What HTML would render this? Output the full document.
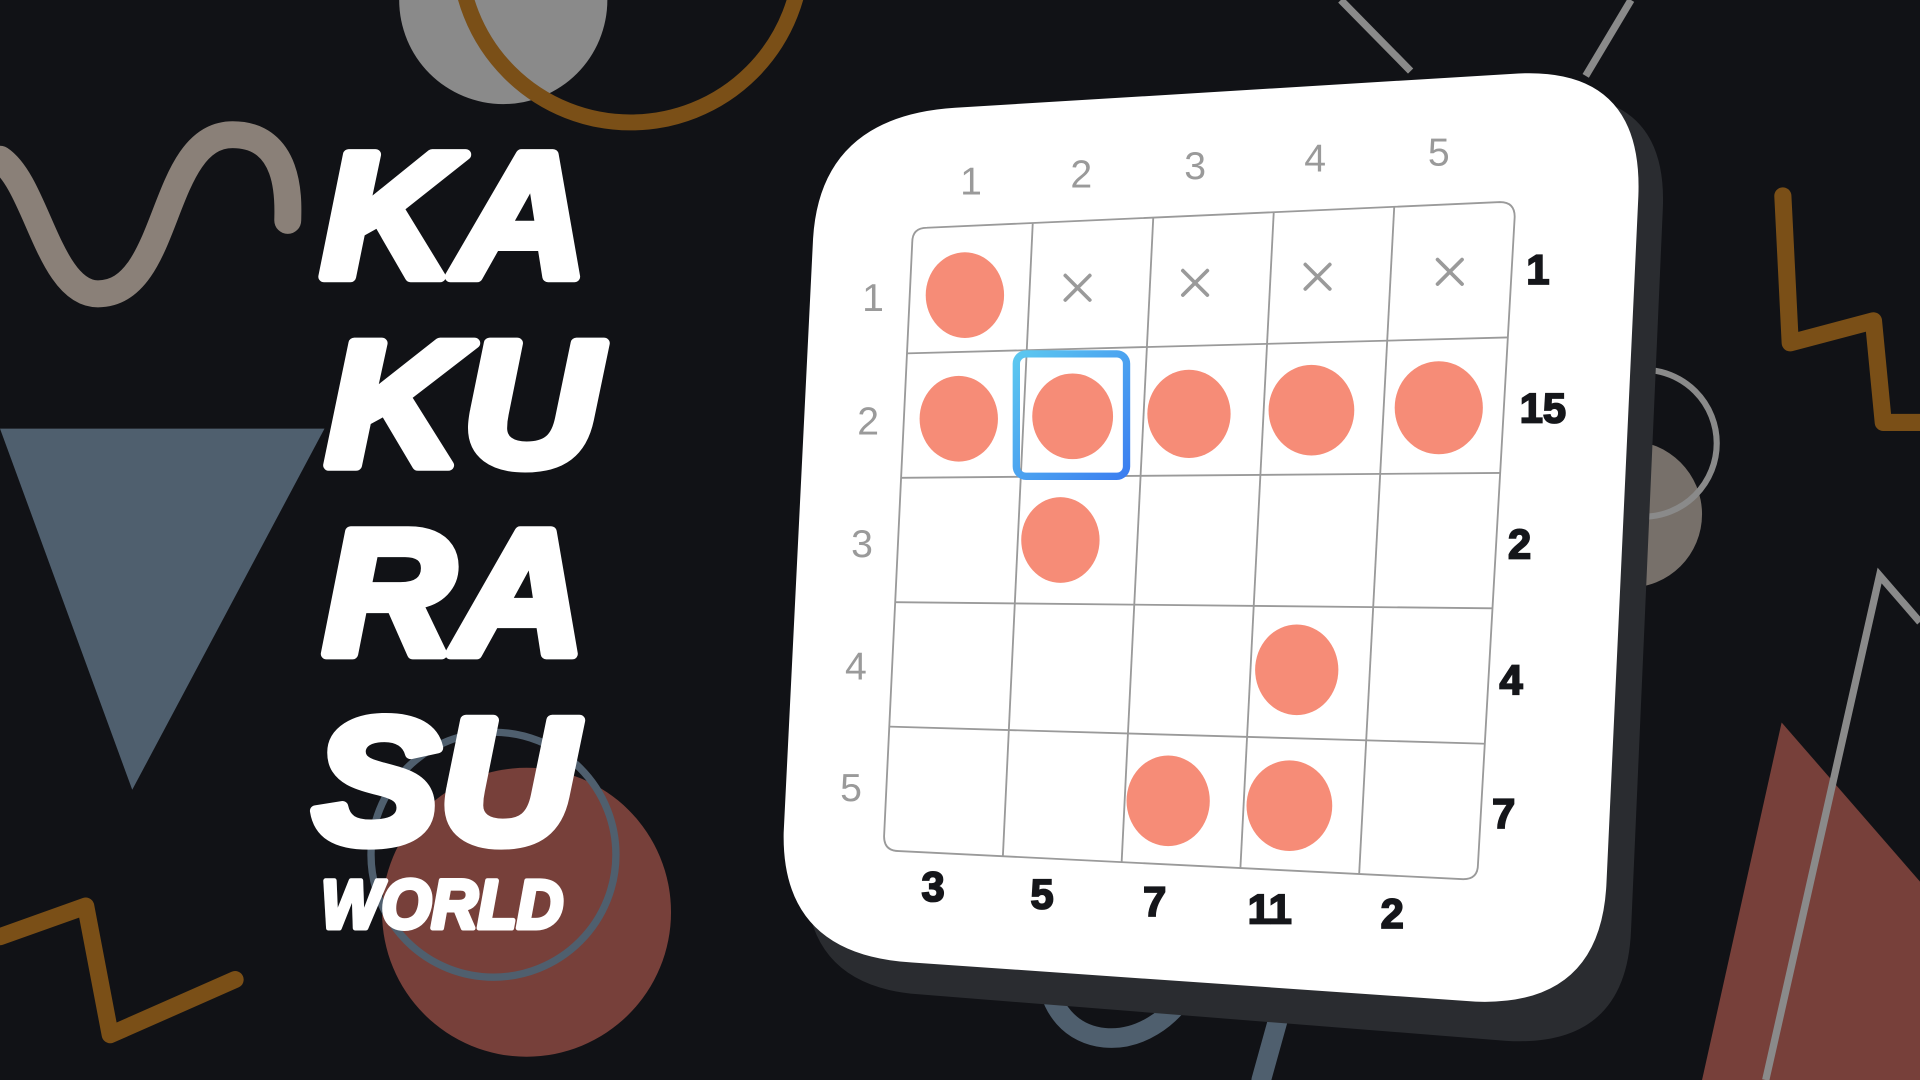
<!DOCTYPE html>
<html><head><meta charset="utf-8"><style>
html,body{margin:0;padding:0;background:#111216;overflow:hidden}
svg{display:block}
</style></head><body>
<svg width="1920" height="1080" viewBox="0 0 1568 882" xmlns="http://www.w3.org/2000/svg">
<rect width="1568" height="882" fill="#111216"/>
<circle cx="411" cy="0" r="85" fill="#8a8a8a"/>
<circle cx="515" cy="-40" r="140" fill="none" stroke="#7a4f17" stroke-width="13"/>
<path d="M0,130 C30,150 40,240 80,240 C140,240 130,110 190,110 C240,110 235,170 235,180" fill="none" stroke="#8a8078" stroke-width="22" stroke-linecap="round"/>
<polygon points="0,350 265,350 108,645" fill="#4f5f6e"/>
<circle cx="430" cy="745" r="118" fill="#77403a"/>
<circle cx="403" cy="698" r="100" fill="none" stroke="#4f5f6e" stroke-width="6"/>
<polyline points="0,765 70,740 90,845 192,800" fill="none" stroke="#7a4f17" stroke-width="14" stroke-linecap="round" stroke-linejoin="round"/>
<line x1="1095" y1="0" x2="1152" y2="58" stroke="#8a8a8a" stroke-width="6"/>
<line x1="1332" y1="0" x2="1295" y2="62" stroke="#8a8a8a" stroke-width="6"/>
<polyline points="1456,160 1462,280 1530,262 1538,345 1568,345" fill="none" stroke="#7a4f17" stroke-width="14" stroke-linecap="round" stroke-linejoin="round"/>
<circle cx="1330" cy="420" r="60" fill="#77706a"/>
<circle cx="1342" cy="362" r="60" fill="none" stroke="#8a8a8a" stroke-width="5"/>
<polygon points="1455,590 1568,720 1568,882 1390,882" fill="#77403a"/>
<polyline points="1442,882 1535,470 1568,508" fill="none" stroke="#8a8a8a" stroke-width="6"/>
<path d="M855,790 C855,860 940,870 975,800 M1050,810 L1030,882" fill="none" stroke="#4f5f6e" stroke-width="16" stroke-linecap="round"/>
<path d="M770,110 L1260,78 Q1362,72 1358,170 L1332,760 Q1328,856 1230,850 L750,812 Q655,805 658,710 L680,210 Q684,115 770,110 Z" fill="#2a2c30"/>
<path d="M780,88 L1240,60 Q1342,55 1338,160 L1312,720 Q1308,822 1205,818 L745,786 Q638,780 640,680 L664,195 Q670,95 780,88 Z" fill="#ffffff"/>
<g stroke="#9a9a9a" stroke-width="1.5" fill="none">
<path d="M757,186 L1225,165 Q1237,165 1237,177 L1207,706 Q1207,718 1195,718 L734,695 Q722,695 722,683 L745,198 Q745,186 757,186 Z"/>
<line x1="843.4" y1="182.6" x2="819" y2="699.6"/>
<line x1="941.8" y1="178.2" x2="916" y2="704.2"/>
<line x1="1040.2" y1="173.8" x2="1013" y2="708.8"/>
<line x1="1138.6" y1="169.4" x2="1110" y2="713.4"/>
<line x1="740.4" y1="288.6" x2="1231" y2="275.6"/>
<line x1="735.8" y1="390.2" x2="1225" y2="386.2"/>
<line x1="731.2" y1="491.8" x2="1219" y2="496.8"/>
<line x1="726.6" y1="593.4" x2="1213" y2="607.4"/>
</g>
<g fill="#f68c77">
<ellipse cx="788" cy="241" rx="32" ry="35"/>
<ellipse cx="783" cy="342" rx="32" ry="35"/>
<ellipse cx="876" cy="340" rx="33" ry="35"/>
<ellipse cx="971" cy="338" rx="34" ry="36"/>
<ellipse cx="1071" cy="335" rx="35" ry="37"/>
<ellipse cx="1175" cy="333" rx="36" ry="38"/>
<ellipse cx="866" cy="441" rx="32" ry="35"/>
<ellipse cx="1059" cy="547" rx="34" ry="37"/>
<ellipse cx="954" cy="654" rx="34" ry="37"/>
<ellipse cx="1053" cy="658" rx="35" ry="37"/>
</g>
<defs><linearGradient id="bl" x1="0" y1="0" x2="1" y2="1"><stop offset="0" stop-color="#5cc8f0"/><stop offset="1" stop-color="#3b7ef0"/></linearGradient></defs>
<rect x="830" y="289" width="90" height="100" rx="8" fill="none" stroke="url(#bl)" stroke-width="6"/>
<g stroke="#9a9a9a" stroke-width="3" stroke-linecap="round">
<path d="M870,225 l20,20 M890,225 l-20,20"/>
<path d="M966,221 l20,20 M986,221 l-20,20"/>
<path d="M1066,216 l20,20 M1086,216 l-20,20"/>
<path d="M1174,212 l20,20 M1194,212 l-20,20"/>
</g>
<g font-family="Liberation Sans, sans-serif" font-size="32" fill="#9a9a9a" text-anchor="middle">
<text x="793" y="159">1</text><text x="883" y="153">2</text><text x="976" y="146">3</text><text x="1074" y="140">4</text><text x="1175" y="135">5</text>
<text x="713" y="254">1</text><text x="709" y="355">2</text><text x="704" y="455">3</text><text x="699" y="555">4</text><text x="695" y="654">5</text>
</g>
<g font-family="Liberation Sans, sans-serif" font-size="34" font-weight="bold" fill="#15161a" stroke="#15161a" stroke-width="1.5" text-anchor="middle">
<text x="1256" y="232">1</text><text x="1260" y="345">15</text><text x="1241" y="456">2</text><text x="1234" y="567">4</text><text x="1228" y="676">7</text>
<text x="762" y="736">3</text><text x="851" y="742">5</text><text x="943" y="748">7</text><text x="1037" y="754">11</text><text x="1137" y="758">2</text>
</g>
<g font-family="Liberation Sans, sans-serif" font-weight="bold" font-style="italic" fill="#ffffff" stroke="#ffffff" stroke-width="9" stroke-linejoin="round" font-size="145">
<text x="262" y="226" textLength="218" lengthAdjust="spacingAndGlyphs">KA</text>
<text x="266" y="380" textLength="224" lengthAdjust="spacingAndGlyphs">KU</text>
<text x="264" y="534" textLength="214" lengthAdjust="spacingAndGlyphs">RA</text>
<text x="256" y="688" textLength="214" lengthAdjust="spacingAndGlyphs">SU</text>
<text x="262" y="758" font-size="56" stroke-width="4" textLength="198" lengthAdjust="spacingAndGlyphs">WORLD</text>
</g>
</svg>
</body></html>
